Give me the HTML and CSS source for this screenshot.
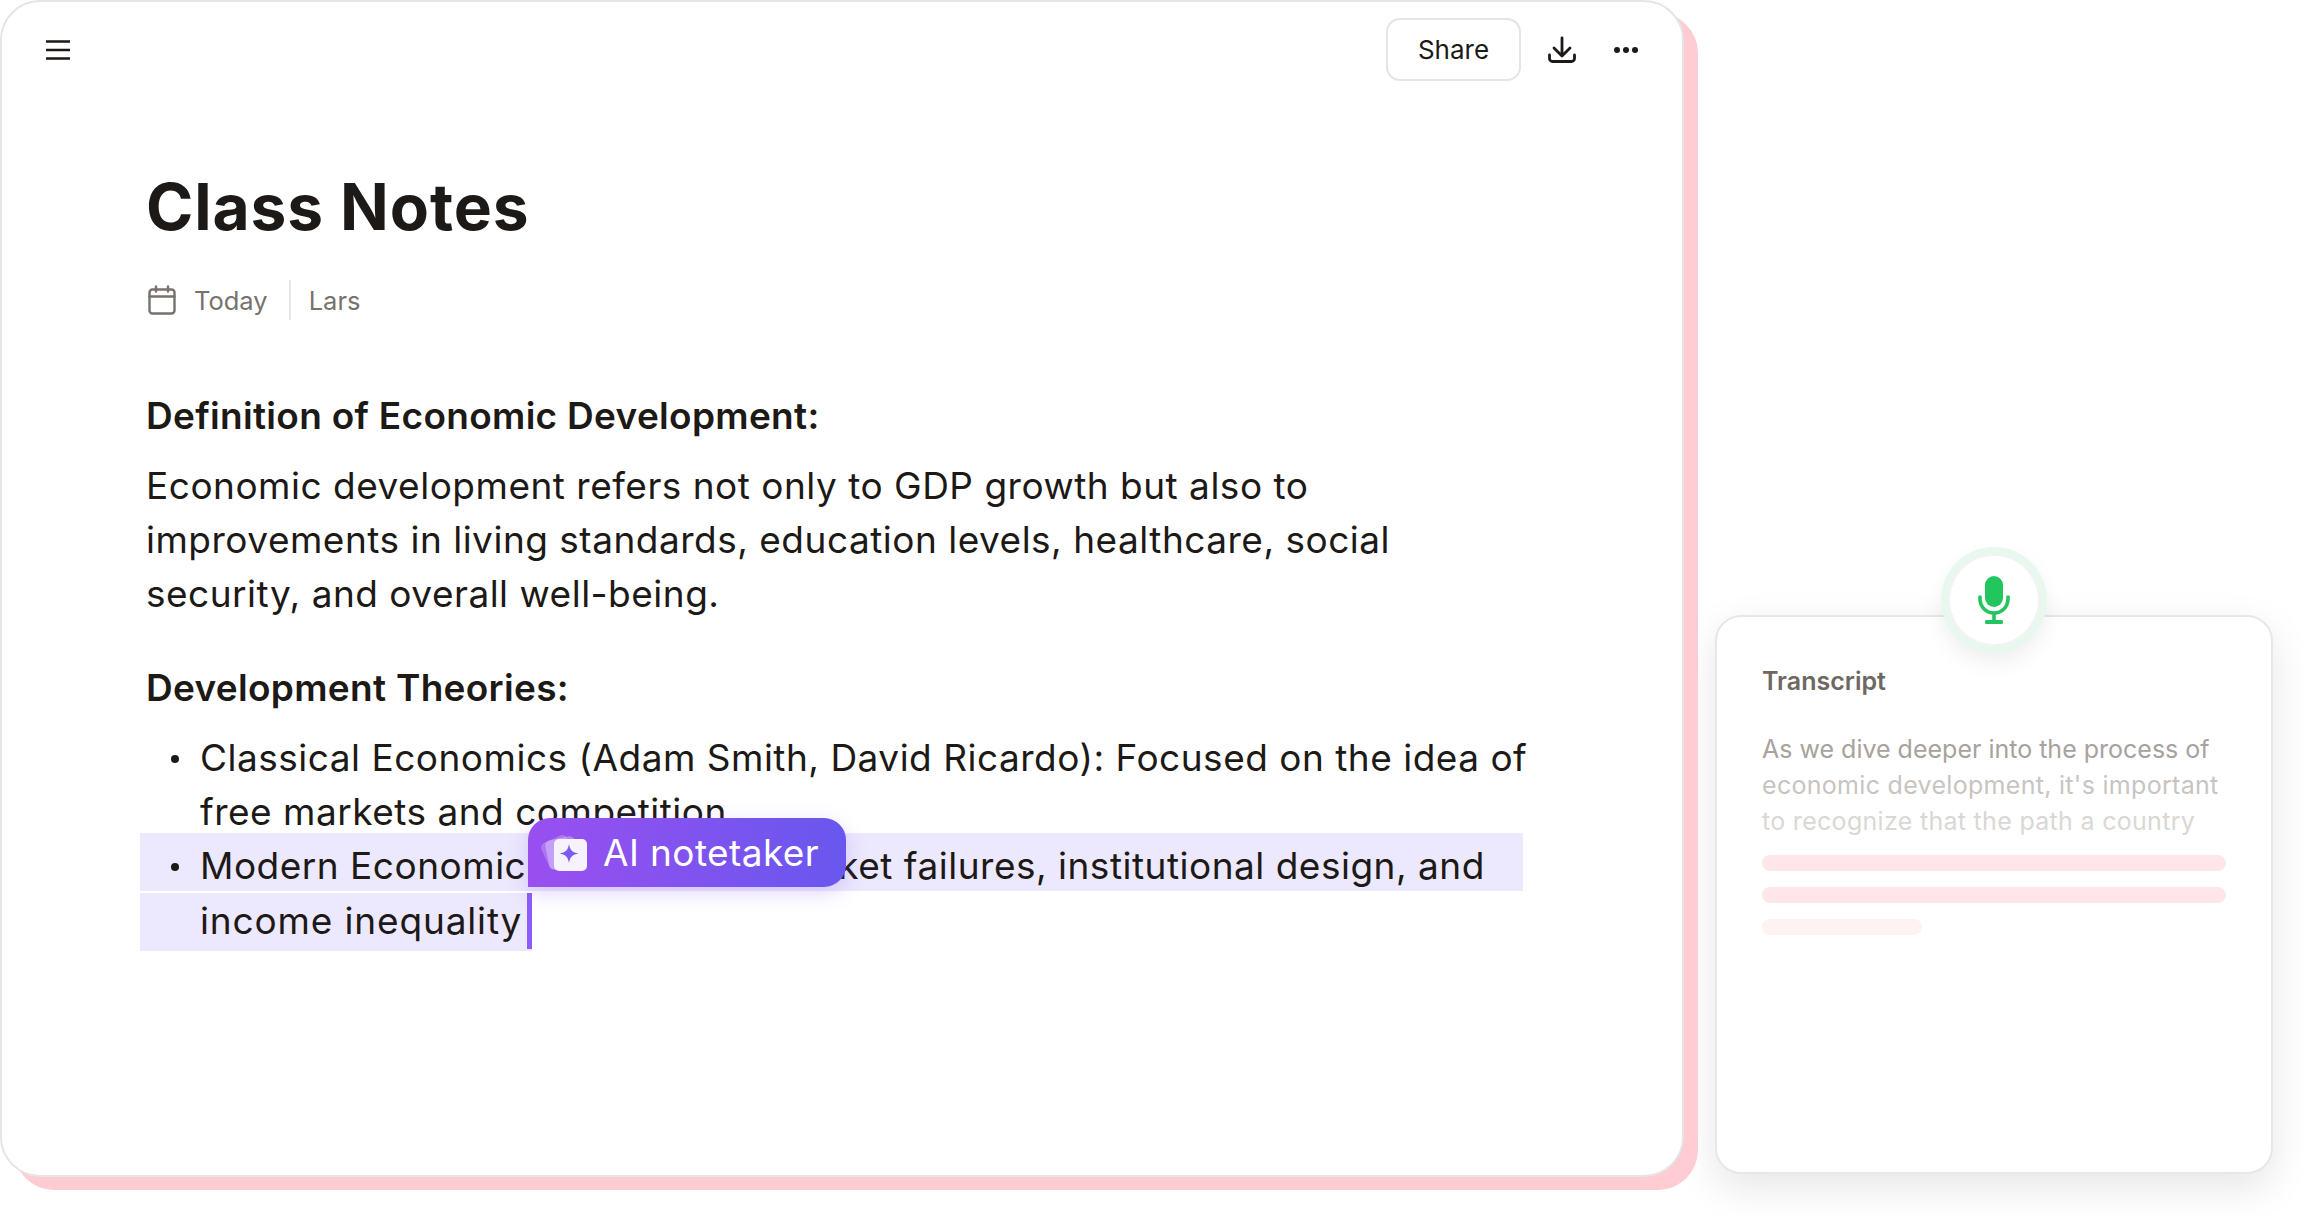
FILE: index.html
```html
<!DOCTYPE html>
<html lang="en">
<head>
    <meta charset="UTF-8">
    <title>Class Notes</title>
    <link rel="stylesheet" href="styles.css">
</head>
<body>
    <div class="page">
        <!-- Note -->
        <main class="note">
            <div class="topbar">
                <svg class="icon-menu" width="24" height="20" viewBox="0 0 24 20"><path d="M0 1.5h24M0 10h24M0 18.5h24" stroke="#1c1917" stroke-width="2.6" fill="none"/></svg>
                <div class="actions">
                    <button class="share">Share</button>
                    <svg class="icon-download" width="30" height="28" viewBox="0 0 30 28" fill="none" stroke="#1c1917" stroke-width="2.8" stroke-linecap="round" stroke-linejoin="round"><path d="M15 2v17M7 12l8 8 8-8"/><path d="M2.5 19v3.500a3 3 0 0 0 3 3h19a3 3 0 0 0 3-3V19"/></svg>
                    <svg class="icon-more" width="24" height="6" viewBox="0 0 24 6" fill="#1c1917"><circle cx="3" cy="3" r="3"/><circle cx="12" cy="3" r="3"/><circle cx="21" cy="3" r="3"/></svg>
                </div>
            </div>

            <div class="content">
                <h1>Class Notes</h1>
                <div class="meta">
                    <svg class="icon-cal" width="28" height="30" viewBox="0 0 28 30" fill="none" stroke="#78716c" stroke-width="2.4" stroke-linecap="round"><rect x="1.500" y="4.500" width="25" height="24" rx="3"/><path d="M1.500 11.500h25M8 1.500v5M20 1.500v5"/></svg>
                    <span class="meta-date">Today</span>
                    <span class="meta-sep"></span>
                    <span>Lars</span>
                </div>

                <h2 class="first">Definition of Economic Development:</h2>
                <p>Economic development refers not only to GDP growth but also to<br>improvements in living standards, education levels, healthcare, social<br>security, and overall well-being.</p>

                <h2>Development Theories:</h2>
                <ul>
                    <li class="line bullet">Classical Economics (Adam Smith, David Ricardo): Focused on the idea of</li>
                    <li class="line">free markets and competition</li>
                    <li class="line bullet mark mark-first">Modern Economics: Studies on market failures, institutional design, and</li>
                    <li class="line mark mark-last">income inequality<span class="caret"></span></li>
                </ul>
            </div>

            <div class="pill">
                <svg width="48" height="48" viewBox="0 0 48 48">
                    <rect x="4" y="9" width="28" height="28" rx="5" fill="#fff" opacity=".22" transform="rotate(-25 18 23)"/>
                    <rect x="7" y="9" width="30" height="30" rx="5" fill="#fff" opacity=".3" transform="rotate(-12 22 24)"/>
                    <rect x="14" y="10" width="33" height="32" rx="5" fill="#f6f2fe"/>
                    <path d="M29 15c1 6 3.500 8.500 9.500 9.500-6 1-8.500 3.500-9.500 9.500-1-6-3.500-8.500-9.500-9.500 6-1 8.500-3.500 9.500-9.500z" fill="#7c5cf0"/>
                </svg>
                <span>AI notetaker</span>
            </div>
        </main>

        <!-- Transcript -->
        <aside class="transcript">
            <div class="mic">
                <svg width="32" height="48" viewBox="0 0 32 48"><rect x="7" y="0" width="18" height="31" rx="9" fill="#22c55e"/><path d="M2 21v2a14 14 0 0 0 28 0v-2" fill="none" stroke="#22c55e" stroke-width="3.600" stroke-linecap="round"/><path d="M16 37v8" stroke="#22c55e" stroke-width="3.600"/><rect x="7" y="44" width="18" height="4" rx="1.500" fill="#22c55e"/></svg>
            </div>
            <h3>Transcript</h3>
            <div class="lines">
                <div class="tone-1">As we dive deeper into the process of</div>
                <div class="tone-2">economic development, it's important</div>
                <div class="tone-3">to recognize that the path a country</div>
            </div>
            <div class="bar"></div>
            <div class="bar"></div>
            <div class="bar bar-short"></div>
        </aside>
    </div>
</body>
</html>
```

FILE: styles.css
```css
* {
    box-sizing: border-box;
}
body {
    margin: 0;
    background: white;
    font-family: Inter, "Liberation Sans", sans-serif;
    color: #1c1917;
}
.page {
    display: flex;
    align-items: flex-start;
    width: 2304px;
    height: 1216px;
    overflow: hidden;
}

/* note card */
.note {
    position: relative;
    z-index: 1;
    flex: none;
    width: 1684px;
    height: 1177px;
    background: white;
    border: 2px solid #e5e5e5;
    border-radius: 40px;
    box-shadow: 14px 13px 0 #ffccd3;
}
.topbar {
    display: flex;
    justify-content: space-between;
    align-items: center;
    padding: 16px 44px 0 44px;
}
.actions {
    display: flex;
    align-items: center;
}
.share {
    width: 135px;
    height: 63px;
    background: white;
    border: 2px solid #e5e5e5;
    border-radius: 14px;
    font-family: inherit;
    font-size: 26px;
    color: #1c1917;
}
.icon-download {
    margin-left: 26px;
}
.icon-more {
    margin-left: 37px;
}
.content {
    padding-left: 144px;
}
h1 {
    margin: 86px 0 0;
    font-size: 64px;
    line-height: 80px;
    font-weight: 700;
    letter-spacing: 0.9px;
}
.meta {
    display: flex;
    align-items: center;
    height: 40px;
    margin-top: 33px;
    font-size: 25.500px;
    color: #78716c;
}
.icon-cal {
    margin-left: 2px;
}
.meta-date {
    margin-left: 18px;
}
.meta-sep {
    width: 2px;
    height: 40px;
    margin: 0 18px 0 21px;
    background: #e7e5e4;
}
h2 {
    margin: 40px 0 16px;
    font-size: 37px;
    line-height: 54px;
    font-weight: 600;
    letter-spacing: 0.3px;
}
h2.first {
    margin-top: 69px;
}
p {
    margin: 0;
    font-size: 37px;
    line-height: 54px;
    letter-spacing: 0.5px;
    white-space: nowrap;
}
ul {
    list-style: none;
    margin: 0;
    padding: 0;
    font-size: 37px;
    line-height: 54px;
    letter-spacing: 0.5px;
    white-space: nowrap;
}
.line {
    position: relative;
    padding-left: 54px;
}
.bullet::before {
    content: "";
    position: absolute;
    left: 25px;
    top: 24px;
    width: 8px;
    height: 8px;
    border-radius: 50%;
    background: #1c1917;
}
.mark {
    margin-left: -6px;
    padding-left: 60px;
    height: 58px;
    background: #ece8fd;
}
.mark-first {
    width: 1383px;
    margin-top: -6px;
    padding-top: 6px;
}
.mark-first::before {
    left: 31px;
    top: 30px;
}
.mark-last {
    display: flex;
    width: fit-content;
    margin-top: 2px;
    padding-top: 1px;
    letter-spacing: 0.85px;
}
.caret {
    width: 5px;
    height: 56px;
    margin: -1px 0 0 5px;
    background: #8b5cf6;
}

/* floating label over the selection */
.pill {
    position: absolute;
    left: 526px;
    top: 816px;
    z-index: 2;
    display: flex;
    align-items: center;
    gap: 15px;
    width: 318px;
    height: 69px;
    padding-left: 12px;
    border-radius: 22px 22px 22px 0;
    background: linear-gradient(90deg, #9a4ff0, #6857ee);
    box-shadow: 0 6px 20px rgba(139, 92, 246, 0.25);
    color: white;
    font-size: 37px;
    letter-spacing: 0.4px;
}
.pill svg {
    flex: none;
}

/* transcript card */
.transcript {
    position: relative;
    flex: none;
    width: 558px;
    height: 559px;
    margin: 615px 0 0 31px;
    padding: 48px 45px 0;
    background: white;
    border: 2px solid #e7e7e7;
    border-radius: 26px;
    box-shadow: 0 14px 40px rgba(0, 0, 0, 0.1);
}
.mic {
    position: absolute;
    left: 233px;
    top: -61px;
    display: flex;
    align-items: center;
    justify-content: center;
    width: 88px;
    height: 88px;
    border-radius: 50%;
    background: white;
    box-shadow: 0 0 0 2px #f3f3f3, 0 0 0 9px #e8f8ee, 0 10px 24px 6px rgba(0, 0, 0, 0.08);
}
h3 {
    margin: 0;
    font-size: 25px;
    line-height: 32px;
    font-weight: 600;
    color: #6f6761;
}
.lines {
    margin-top: 34px;
    font-size: 25px;
    line-height: 36px;
    white-space: nowrap;
}
.tone-1 {
    color: #a8a29e;
}
.tone-2 {
    color: #c8c4c1;
    letter-spacing: 0.3px;
}
.tone-3 {
    color: #dad7d5;
    letter-spacing: 0.3px;
}
.bar {
    width: 464px;
    height: 16px;
    margin-top: 16px;
    border-radius: 8px;
    background: #ffe6e9;
}
.bar-short {
    width: 160px;
    background: #fff2f3;
}
```
